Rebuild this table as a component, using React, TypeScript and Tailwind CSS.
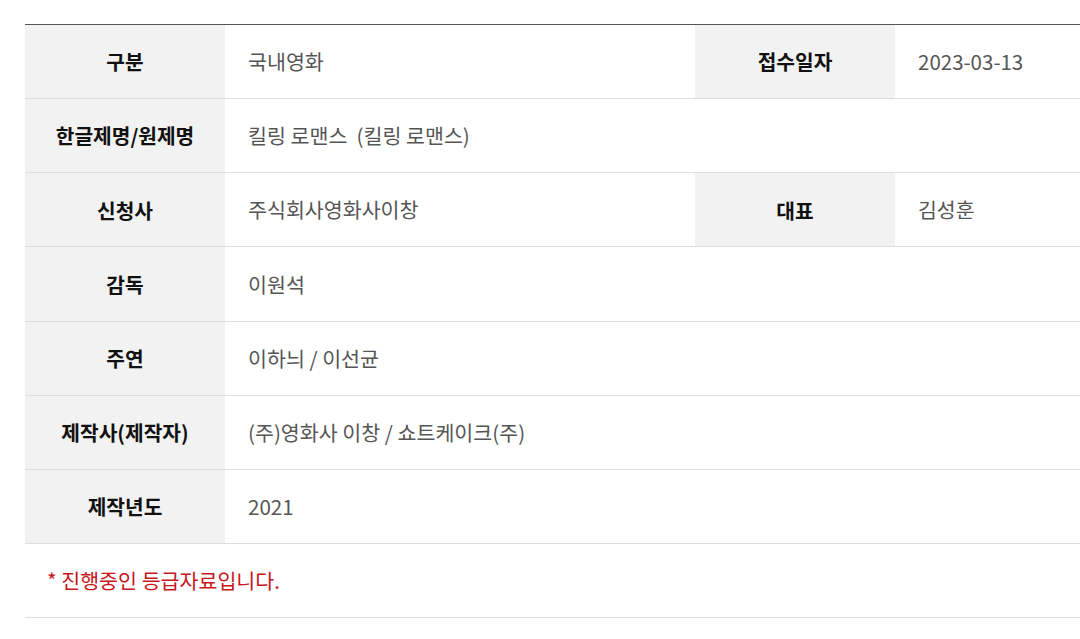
import React from "react";

type Row = { h1: string; v1: string; h2?: string; v2?: string };

const rows: Row[] = [
  { h1: "구분", v1: "국내영화", h2: "접수일자", v2: "2023-03-13" },
  { h1: "한글제명/원제명", v1: "킬링 로맨스  (킬링 로맨스)" },
  { h1: "신청사", v1: "주식회사영화사이창", h2: "대표", v2: "김성훈" },
  { h1: "감독", v1: "이원석" },
  { h1: "주연", v1: "이하늬 / 이선균" },
  { h1: "제작사(제작자)", v1: "(주)영화사 이창 / 쇼트케이크(주)" },
  { h1: "제작년도", v1: "2021" },
];

export default function App() {
  return (
    <div
      className="w-[1080px] h-[639px] bg-white overflow-hidden pt-[24px] pl-[25px]"
      style={{ fontFamily: '"Noto Sans CJK KR", "Noto Sans", sans-serif' }}
    >
      <div className="w-[1055px] border-t border-[#555555]">
        {rows.map((r, i) => (
          <div key={i} className="flex h-[74.15px] border-b border-[#dddddd]">
            <div className="w-[200px] shrink-0 bg-[#f2f2f2] flex items-center justify-center text-[20.3px] font-bold text-[#111111]">
              {r.h1}
            </div>
            <div className={`${r.h2 ? "w-[470px]" : "flex-1"} shrink-0 flex items-center pl-[23px] text-[20.6px] text-[#555555] whitespace-pre`}>
              {r.v1}
            </div>
            {r.h2 && (
              <>
                <div className="w-[200px] shrink-0 bg-[#f2f2f2] flex items-center justify-center text-[20.3px] font-bold text-[#111111]">
                  {r.h2}
                </div>
                <div className="flex-1 flex items-center pl-[23px] text-[20.5px] text-[#555555]">
                  {r.v2}
                </div>
              </>
            )}
          </div>
        ))}
        <div className="flex items-center h-[74.15px] border-b border-[#dddddd] pl-[22px] text-[20.6px] text-[#c8161d]">
          * 진행중인 등급자료입니다.
        </div>
      </div>
    </div>
  );
}
